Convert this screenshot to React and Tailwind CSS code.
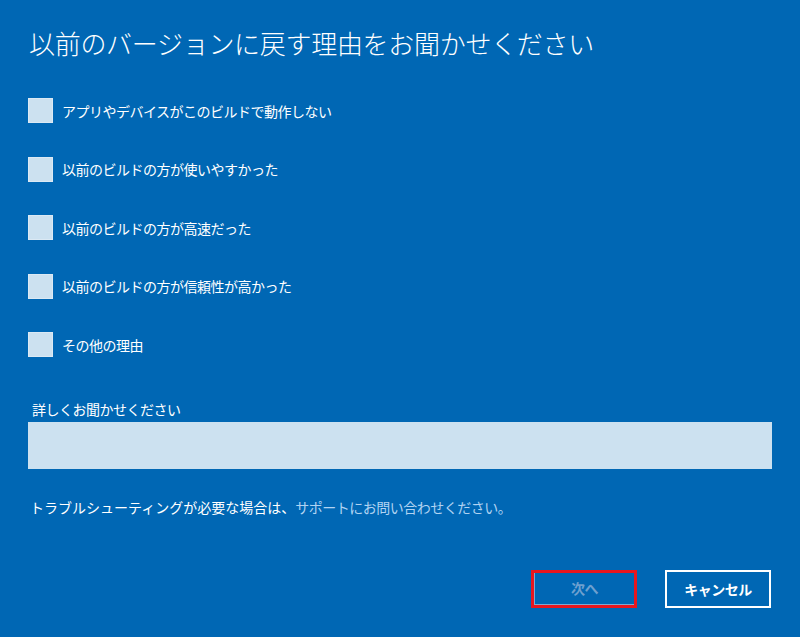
import React from "react";

const font = { fontFamily: '"Noto Sans CJK JP", "Noto Sans", sans-serif' };

const reasons = [
  "アプリやデバイスがこのビルドで動作しない",
  "以前のビルドの方が使いやすかった",
  "以前のビルドの方が高速だった",
  "以前のビルドの方が信頼性が高かった",
  "その他の理由",
];

export default function App() {
  return (
    <div
      className="w-[800px] h-[637px] bg-[#0067b4] text-white flex flex-col px-[28px] overflow-hidden"
      style={font}
    >
      <h1 className="mt-[23px] text-[26px] font-light leading-[40px] tracking-[-0.3px] ml-[1px]">
        以前のバージョンに戻す理由をお聞かせください
      </h1>
      <div className="mt-[35px] flex flex-col gap-[33.5px]">
        {reasons.map((r) => (
          <div key={r} className="flex items-center h-[25px]">
            <div className="w-[25px] h-[25px] bg-[#cce1f0] border border-[#dbe9f4]" />
            <span className="ml-[9px] text-[14px] tracking-[-0.5px] leading-[20px]">{r}</span>
          </div>
        ))}
      </div>
      <div className="mt-[42px] ml-[4px] text-[14px] tracking-[-0.5px] leading-[20px]">
        詳しくお聞かせください
      </div>
      <div className="mt-[3px] h-[47px] w-[744px] bg-[#cce1f0]" />
      <div className="mt-[28px] ml-[2px] text-[14px] leading-[20px] flex">
        <span>トラブルシューティングが必要な場合は、</span>
        <span className="text-[#b0d3f2] tracking-[-0.5px]">サポートにお問い合わせください。</span>
      </div>
      <div className="mt-[53px] flex justify-end gap-[28px] pr-[1px]">
        <div className="w-[106px] h-[38px] border-[3px] border-[#e8161e] flex">
          <div className="flex-1 flex items-center justify-center border-l border-b border-[#7fa8cf] text-[14px] tracking-[-0.5px] font-bold text-[#6ea0cf]">
            次へ
          </div>
        </div>
        <div className="w-[106px] h-[38px] border-2 border-white flex items-center justify-center text-[14px] tracking-[-0.5px] font-bold">
          キャンセル
        </div>
      </div>
    </div>
  );
}
